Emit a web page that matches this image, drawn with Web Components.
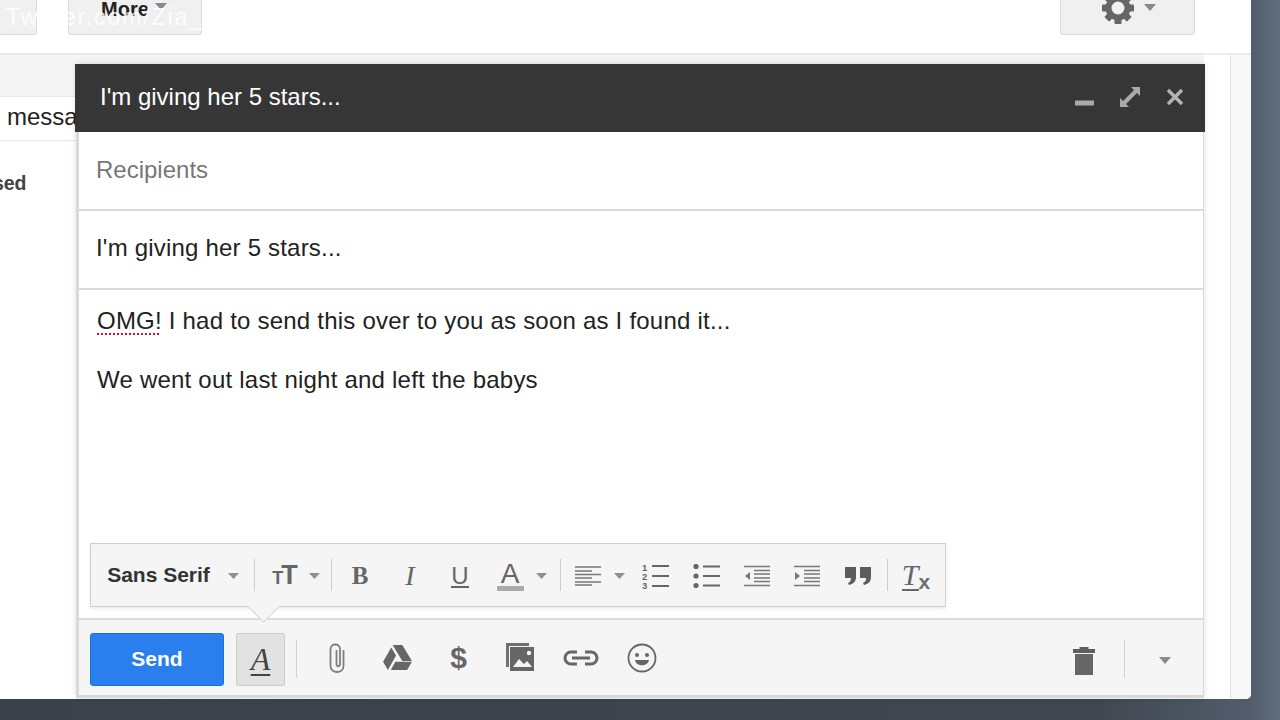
<!DOCTYPE html>
<html>
<head>
<meta charset="utf-8">
<title>Compose</title>
<style>
  html, body { margin: 0; height: 100%; overflow: hidden; font-family: "Liberation Sans", Arial, sans-serif; }
</style>
</head>
<body>
<mail-stage>
  <mail-page></mail-page>
  <compose-window subject="I'm giving her 5 stars..."></compose-window>
</mail-stage>

<script>
const gearTeeth = [0, 45, 90, 135, 180, 225, 270, 315]
  .map(a => `<rect x="13.500" y="1" width="7" height="8" rx="1" transform="rotate(${a} 17 17)"/>`).join("");

const ICONS = {
  caret: `<svg width="12" height="7" viewBox="0 0 12 7"><path d="M0 0h12L6 7z" fill="#8a8a8a"/></svg>`,
  caretS: `<svg width="11" height="6" viewBox="0 0 11 6"><path d="M0 0h11L5.500 6z" fill="#8f8f8f"/></svg>`,
  min: `<svg width="20" height="6" viewBox="0 0 20 6"><rect width="19" height="5" y="0.5" fill="#a9a9a9"/></svg>`,
  expand: `<svg width="22" height="22" viewBox="0 0 22 22"><path d="M12 1h9v9l-3-3-11 11 3 3H1v-9l3 3L15 4z" fill="#a9a9a9"/></svg>`,
  close: `<svg width="20" height="20" viewBox="0 0 20 20"><path d="M3 3l14 14M17 3L3 17" stroke="#b4b4b4" stroke-width="3.400"/></svg>`,
  gear: `<svg width="34" height="34" viewBox="0 0 34 34"><g fill="#666">${gearTeeth}</g><circle cx="17" cy="17" r="9.500" fill="none" stroke="#666" stroke-width="6"/></svg>`,
  clip: `<svg width="18" height="32" viewBox="0 0 18 32"><path d="M15.500 8v16c0 8-13 8-13 0V7c0-6 9.500-6 9.500 0v15c0 3-3.500 3-3.500 0V8" fill="none" stroke="#808080" stroke-width="1.800"/></svg>`,
  drive: `<svg width="29" height="26" viewBox="0 0 30 27"><path d="M10 0h10l10 16.500h-10zM8.500 2.500L13.500 11 5 26 0 17.500zM8 26l4.800-8.500H30L25 26z" fill="#666"/></svg>`,
  photo: `<svg width="28" height="29" viewBox="0 0 28 29"><path d="M0 0h23v3H3v21H0z" fill="#707070"/><rect x="4" y="4" width="24" height="24" fill="#666"/><circle cx="23" cy="10" r="2.200" fill="#f4f4f4"/><path d="M7 24l6-8 5 5 3-3 5 6z" fill="#f4f4f4"/></svg>`,
  link: `<svg width="36" height="16" viewBox="0 0 36 16"><path d="M14 2H8a6 6 0 0 0 0 12h6M22 2h6a6 6 0 0 1 0 12h-6M9 8h18" fill="none" stroke="#666" stroke-width="3"/></svg>`,
  smile: `<svg width="30" height="30" viewBox="0 0 30 30"><circle cx="15" cy="15" r="13.500" fill="none" stroke="#666" stroke-width="1.800"/><circle cx="10" cy="12" r="2" fill="#666"/><circle cx="20" cy="12" r="2" fill="#666"/><path d="M8 17h14c-1 7-13 7-14 0z" fill="#666"/></svg>`,
  trash: `<svg width="24" height="30" viewBox="0 0 24 30"><path d="M7.500 3V1h9v2zM1 3h22v4H1z" fill="#5f5f5f"/><rect x="3" y="8" width="18" height="21" fill="#666"/></svg>`,
  align: `<svg width="28" height="22" viewBox="0 0 28 22"><path d="M1 2h26M1 6h17M1 9.500h26M1 13h17M1 17h26M1 20h17" stroke="#777" stroke-width="1.600"/></svg>`,
  numbered: `<svg width="28" height="26" viewBox="0 0 28 26"><g font-family="Liberation Sans" font-size="9.500" font-weight="700" fill="#666"><text x="0" y="8">1</text><text x="0" y="16.500">2</text><text x="0" y="25.500">3</text></g><path d="M10 3h17M10 13h17M10 23h17" stroke="#666" stroke-width="1.800"/></svg>`,
  bullets: `<svg width="28" height="24" viewBox="0 0 28 24"><circle cx="3" cy="2.500" r="2.600" fill="#666"/><circle cx="3" cy="12" r="2.600" fill="#666"/><circle cx="3" cy="21.500" r="2.600" fill="#666"/><path d="M10 2.500h17M10 12h17M10 21.500h17" stroke="#666" stroke-width="1.800"/></svg>`,
  outdent: `<svg width="28" height="22" viewBox="0 0 28 22"><path d="M1 1.500h26M1 20.500h26M11 5.500h16M11 9h16M11 13h16M11 16.500h16" stroke="#777" stroke-width="1.700"/><path d="M7 7v8l-5-4z" fill="#777"/></svg>`,
  indent: `<svg width="28" height="22" viewBox="0 0 28 22"><path d="M1 1.500h26M1 20.500h26M11 5.500h16M11 9h16M11 13h16M11 16.500h16" stroke="#777" stroke-width="1.700"/><path d="M2 7v8l5-4z" fill="#777"/></svg>`,
  quote: `<svg width="28" height="20" viewBox="0 0 28 20"><path d="M1 1h11v10c0 5-3 7-7 8l-1-2c2-1 3-2 3-5H1zM16 1h11v10c0 5-3 7-7 8l-1-2c2-1 3-2 3-5h-6z" fill="#5c5c5c"/></svg>`
};

// small helper, so every element doesn't repeat the same boilerplate
class ShadowThing extends HTMLElement {
  render(html) {
    if (!this.shadowRoot) this.attachShadow({ mode: "open" });
    this.shadowRoot.innerHTML = html;
  }
}

class GmIcon extends ShadowThing {
  connectedCallback() {
    this.render(`<style>:host{display:inline-flex;align-items:center;justify-content:center}svg{display:block}</style>${ICONS[this.getAttribute("name")] || ""}`);
  }
}

class MailStage extends ShadowThing {
  connectedCallback() {
    this.render(`
      <style>
        :host {
          display: block; position: relative; width: 1280px; height: 720px; overflow: hidden;
          background: linear-gradient(90deg, #3c424c 0, #40464f 85%, #525c6b 97.7%, #616e7e 100%);
        }
      </style>
      <slot></slot>`);
  }
}

class MailPage extends ShadowThing {
  connectedCallback() {
    this.render(`
      <style>
        :host {
          display: flex; flex-direction: column; width: 1251px; height: 699px; background: #fff;
          border-bottom-right-radius: 5px; overflow: hidden; font-family: "Liberation Sans", sans-serif;
        }
        .top { height: 53px; flex: none; display: flex; position: relative; border-bottom: 2px solid #ececec; }
        .btn { height: 35px; box-sizing: border-box; background: #f0f0f0; border: 1px solid #dcdcdc; border-top: 0; border-radius: 0 0 3px 3px; display: flex; align-items: flex-end; }
        .btn1 { width: 38px; margin-left: -1px; }
        .more { width: 134px; margin-left: 31px; padding: 0 0 15px 32px; font: 700 20px/20px "Liberation Sans", sans-serif; color: #222; gap: 6px; }
        .more gm-icon { margin-bottom: 9px; }
        .gear { width: 135px; margin-left: 858px; align-items: flex-start; overflow: hidden; padding-left: 40px; gap: 9px; }
        .gear gm-icon:first-child { margin-top: -9px; }
        .gear gm-icon:last-child { margin-top: 4px; }
        .mark { position: absolute; left: 6px; top: 3px; font: 23px/28px "Liberation Sans", sans-serif; color: rgba(255,255,255,.85); letter-spacing: 1.900px; }
        .main { flex: 1; display: flex; }
        .left { flex: none; width: 1204px; }
        .band { height: 41px; background: #f4f4f4; border-bottom: 1px solid #e6e6e6; }
        .rail { margin-left: 26px; flex: 1; background: #f8f8f8; border-left: 1px solid #e6e6e6; }
        .row { height: 44px; border-bottom: 1px solid #e6e6e6; box-sizing: border-box; font: 24px/40px "Liberation Sans", sans-serif; color: #222; padding-left: 7px; }
        .cat { font: 700 19.500px/24px "Liberation Sans", sans-serif; color: #444; margin-top: 30px; margin-left: -45px; }
      </style>
      <div class="top">
        <div class="btn btn1"></div>
        <div class="btn more">More <gm-icon name="caret"></gm-icon></div>
        <div class="btn gear"><gm-icon name="gear"></gm-icon><gm-icon name="caret"></gm-icon></div>
        <div class="mark">Twitter.com/Zia_</div>
      </div>
      <div class="main">
        <div class="left">
          <div class="band"></div>
          <div class="row">messages</div>
          <div class="cat">Unused</div>
        </div>
        <div class="rail"></div>
      </div>`);
  }
}

class FormatBar extends ShadowThing {
  connectedCallback() {
    // [slot width, what goes in the slot]
    const caret = `<gm-icon name="caretS"></gm-icon>`;
    const sep = `<i class="sep"></i>`;
    const slots = [
      [135, `<span class="font">Sans Serif</span>`],
      [14, caret],
      [28, sep],
      [34, `<span class="tt"><small>T</small>T</span>`],
      [25, caret],
      [8, sep],
      [50, `<span class="b">B</span>`],
      [50, `<span class="i">I</span>`],
      [50, `<span class="u">U</span>`],
      [50, `<span class="a">A</span>`],
      [12, caret],
      [26, sep],
      [30, `<gm-icon name="align"></gm-icon>`],
      [32, caret],
      [42, `<gm-icon name="numbered"></gm-icon>`],
      [60, `<gm-icon name="bullets"></gm-icon>`],
      [40, `<gm-icon name="outdent"></gm-icon>`],
      [60, `<gm-icon name="indent"></gm-icon>`],
      [42, `<gm-icon name="quote"></gm-icon>`],
      [16, sep],
      [42, `<span class="tx"><b>T</b><em>x</em></span>`]
    ];
    this.render(`
      <style>
        :host {
          display: flex; position: absolute; left: 11px; bottom: 88px; width: 856px; height: 64px; box-sizing: border-box;
          background: #f5f5f5; border: 1px solid #cfcfcf; box-shadow: 0 2px 3px rgba(0,0,0,.08);
          color: #666; z-index: 2;
        }
        :host::after {
          content: ""; position: absolute; left: 161px; top: 51px; width: 22px; height: 22px;
          background: #f5f5f5; border: solid #d8d8d8; border-width: 0 1px 1px 0; transform: rotate(45deg); z-index: 3;
        }
        .slot { flex: none; display: flex; align-items: center; justify-content: center; height: 100%; box-sizing: border-box; padding-top: 2px; }
        .slot:first-child { justify-content: flex-start; padding: 0 0 0 17px; }
        .sep { display: block; width: 1px; height: 32px; background: #cfcfcf; margin-top: -2px; }
        .font { font: 700 21px/24px "Liberation Sans", sans-serif; color: #333; margin-top: -2px; }
        .tt { font: 700 27px/28px "Liberation Sans", sans-serif; }
        .tt small { font-size: 18px; margin-right: -2px; }
        .b { font: 700 25px/28px "Liberation Serif", serif; }
        .i { font: italic 28px/28px "Liberation Serif", serif; }
        .u { font: 24px/24px "Liberation Sans", sans-serif; border-bottom: 2px solid #666; height: 22px; }
        .a { font: 28px/24px "Liberation Sans", sans-serif; border-bottom: 5px solid #aaa; height: 24px; width: 27px; text-align: center; }
        .tx { font: italic 30px/28px "Liberation Serif", serif; display: inline-flex; align-items: flex-end; }
        .tx b { font-weight: 400; border-bottom: 2px solid #666; }
        .tx em { font: 700 21px/18px "Liberation Sans", sans-serif; margin-left: 0; color: #6e6e6e; }
      </style>
      ${slots.map(s => `<div class="slot" style="width:${s[0]}px">${s[1]}</div>`).join("")}`);
  }
}

class ComposeWindow extends ShadowThing {
  connectedCallback() {
    const subject = this.getAttribute("subject");
    this.render(`
      <style>
        :host {
          position: absolute; left: 76px; top: 64px; width: 1128px; height: 634px; display: flex; flex-direction: column;
          background: #fff; box-shadow: 0 0 6px rgba(0,0,0,.14); font-family: "Liberation Sans", sans-serif;
          border: solid #d9d9d9; border-width: 0 1px 3px 3px; box-sizing: border-box;
        }
        header {
          height: 68px; flex: none; box-sizing: border-box; margin-left: -4px; margin-right: -2px; background: #363636; color: #fff;
          display: flex; align-items: center; padding: 0 8px 2px 25px; font: 24px/28px "Liberation Sans", sans-serif;
        }
        header span { flex: 1; }
        header gm-icon { width: 45px; }
        header gm-icon:first-of-type { margin-top: 12px; }
        .recip, .subj { height: 79px; flex: none; box-sizing: border-box; border-bottom: 2px solid #dadada; display: flex; align-items: center; padding-left: 17px; font-size: 24px; }
        .recip { color: #777; padding-bottom: 2px; }
        .subj { color: #222; padding-bottom: 3px; letter-spacing: .2px; }
        .body { flex: 1; padding: 16px 18px; font-size: 24px; letter-spacing: .22px; line-height: 29px; color: #222; }
        .body p { margin: 0 0 30px; }
        .bad { text-decoration: underline dotted #d0103a 2px; text-underline-offset: 4px; }
        footer {
          height: 77px; flex: none; box-sizing: border-box; background: #f5f5f5; border-top: 2px solid #dcdcdc;
          display: flex; align-items: center; padding-left: 11px;
        }
        .send {
          width: 134px; height: 53px; box-sizing: border-box; background: #2a7fef; border: 1px solid #1f6fd6; border-radius: 3px;
          color: #fff; font: 700 21px/50px "Liberation Sans", sans-serif; text-align: center; margin-top: 3px;
        }
        .fmt {
          width: 49px; height: 53px; box-sizing: border-box; margin: 3px 0 0 12px; background: #e2e2e2; border: 1px solid #ccc; border-radius: 2px;
          display: flex; align-items: center; justify-content: center; color: #444; font: italic 32px/30px "Liberation Serif", serif;
        }
        .fmt u { text-underline-offset: 4px; text-decoration-thickness: 2px; }
        .sep { width: 1px; height: 38px; background: #d0d0d0; margin-top: 2px; }
        .tool { width: 61px; flex: none; display: flex; justify-content: center; color: #666; }
        .dollar { font: 700 30px/32px "Liberation Sans", sans-serif; }
        .grow { flex: 1; }
      </style>
      <header>
        <span>${subject}</span>
        <gm-icon name="min"></gm-icon><gm-icon name="expand"></gm-icon><gm-icon name="close"></gm-icon>
      </header>
      <div class="recip">Recipients</div>
      <div class="subj">${subject}</div>
      <div class="body">
        <p><span class="bad">OMG!</span> I had to send this over to you as soon as I found it...</p>
        <p>We went out last night and left the babys</p>
      </div>
      <format-bar></format-bar>
      <footer>
        <div class="send">Send</div>
        <div class="fmt"><u>A</u></div>
        <div class="sep" style="margin-left:11px"></div>
        <div class="tool" style="margin-left:9px"><gm-icon name="clip"></gm-icon></div>
        <div class="tool"><gm-icon name="drive"></gm-icon></div>
        <div class="tool dollar">$</div>
        <div class="tool"><gm-icon name="photo"></gm-icon></div>
        <div class="tool"><gm-icon name="link"></gm-icon></div>
        <div class="tool"><gm-icon name="smile"></gm-icon></div>
        <div class="grow"></div>
        <gm-icon name="trash" style="margin-top:6px"></gm-icon>
        <div class="sep" style="margin:2px 0 0 28px"></div>
        <gm-icon name="caret" style="margin:6px 32px 0 34px"></gm-icon>
      </footer>`);
  }
}

customElements.define("gm-icon", GmIcon);
customElements.define("mail-stage", MailStage);
customElements.define("mail-page", MailPage);
customElements.define("format-bar", FormatBar);
customElements.define("compose-window", ComposeWindow);
</script>
</body>
</html>
